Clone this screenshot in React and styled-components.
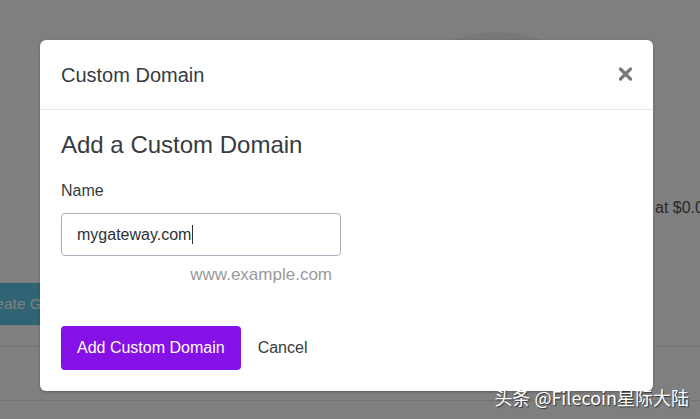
import React from "react";
import styled, { createGlobalStyle } from "styled-components";

const GlobalStyle = createGlobalStyle`
  html, body {
    margin: 0;
    padding: 0;
    width: 700px;
    height: 419px;
    overflow: hidden;
    font-family: "Liberation Sans", Arial, sans-serif;
  }
  * { box-sizing: border-box; }
`;

const App = () => {
  return (
    <>
      <GlobalStyle />
      <Screen>
        <Page>
          <Hero>
            <Visual>
              <Circle />
            </Visual>
            <Aside>
              <Price>at $0.05/GB</Price>
            </Aside>
          </Hero>
          <CtaRow>
            <TealButton>Create Gateway</TealButton>
          </CtaRow>
          <ListRow />
          <ListRow $tall />
        </Page>

        <Overlay>
          <Modal>
            <ModalHeader>
              <ModalTitle>Custom Domain</ModalTitle>
              <CloseButton aria-label="Close">
                <svg width="13" height="14" viewBox="0 0 13 14">
                  <path
                    d="M1.5 2 L11.5 12 M11.5 2 L1.5 12"
                    stroke="#7a7a7a"
                    strokeWidth="3.2"
                    strokeLinecap="round"
                  />
                </svg>
              </CloseButton>
            </ModalHeader>
            <ModalBody>
              <Heading>Add a Custom Domain</Heading>
              <Label>Name</Label>
              <FieldGroup>
                <Field>
                  <span>mygateway.com</span>
                  <Caret />
                </Field>
                <Hint>www.example.com</Hint>
              </FieldGroup>
              <Actions>
                <PrimaryButton>Add Custom Domain</PrimaryButton>
                <LinkButton>Cancel</LinkButton>
              </Actions>
            </ModalBody>
          </Modal>
        </Overlay>

        <Watermark>头条 @Filecoin星际大陆</Watermark>
      </Screen>
    </>
  );
};

const Screen = styled.div`
  position: relative;
  width: 700px;
  height: 419px;
  overflow: hidden;
  background: #ffffff;
`;

const Page = styled.main`
  display: flex;
  flex-direction: column;
  padding-top: 32px;
`;

const Hero = styled.section`
  display: flex;
  height: 251px;
`;

const Visual = styled.div`
  flex: 1;
  display: flex;
  justify-content: flex-end;
  padding-right: 27px;
  overflow: hidden;
`;

const Circle = styled.div`
  width: 260px;
  height: 260px;
  flex-shrink: 0;
  border-radius: 50%;
  background: #f0f0f0;
`;

const Aside = styled.div`
  width: 45px;
  padding-top: 167px;
  overflow: hidden;
`;

const Price = styled.p`
  margin: 0;
  white-space: nowrap;
  font-size: 16px;
  color: #555555;
`;

const CtaRow = styled.div`
  display: flex;
  height: 42px;
`;

const TealButton = styled.button`
  margin-left: -37px;
  padding: 0 16px;
  height: 42px;
  border: none;
  border-radius: 4px;
  background: #5ec8e8;
  color: #ffffff;
  font-family: inherit;
  font-size: 15.5px;
`;

const ListRow = styled.div`
  height: ${({ $tall }) => ($tall ? "54px" : "22px")};
  border-bottom: 1px solid #e4e4e4;
`;

const Overlay = styled.div`
  position: absolute;
  inset: 0;
  background: rgba(0, 0, 0, 0.5);
  display: flex;
  align-items: flex-start;
  padding: 40px 0 0 40px;
`;

const Modal = styled.div`
  width: 613px;
  background: #ffffff;
  border-radius: 6px;
  box-shadow: 0 1px 3px rgba(0, 0, 0, 0.25);
  overflow: hidden;
`;

const ModalHeader = styled.header`
  display: flex;
  align-items: center;
  justify-content: space-between;
  height: 70px;
  padding: 2px 21px 0 21px;
  border-bottom: 1px solid #e8e9ef;
`;

const ModalTitle = styled.h2`
  margin: 0;
  font-size: 20px;
  font-weight: 400;
  color: #363b41;
`;

const CloseButton = styled.button`
  display: flex;
  padding: 0 0 4px;
  border: none;
  background: none;
  cursor: pointer;
`;

const ModalBody = styled.div`
  display: flex;
  flex-direction: column;
  align-items: flex-start;
  padding: 20px 21px 21px;
`;

const Heading = styled.h3`
  margin: 0;
  font-size: 24px;
  line-height: 29px;
  font-weight: 400;
  color: #363b41;
`;

const Label = styled.label`
  margin-top: 22px;
  font-size: 16px;
  line-height: 19px;
  color: #363b41;
`;

const FieldGroup = styled.div`
  display: flex;
  flex-direction: column;
  width: 280px;
  margin-top: 13px;
`;

const Field = styled.div`
  display: flex;
  align-items: center;
  height: 43px;
  padding: 0 15px;
  border: 1px solid #a7afbb;
  border-radius: 4px;
  font-size: 16px;
  color: #2b3036;
`;

const Caret = styled.span`
  width: 1px;
  height: 19px;
  margin-left: 1px;
  background: #2b3036;
`;

const Hint = styled.span`
  margin-top: 9px;
  padding-right: 9px;
  text-align: right;
  font-size: 17px;
  line-height: 19px;
  color: #9a9a9a;
`;

const Actions = styled.div`
  display: flex;
  align-items: center;
  gap: 17px;
  margin-top: 42px;
`;

const PrimaryButton = styled.button`
  height: 44px;
  padding: 0 16px;
  border: none;
  border-radius: 4px;
  background: #8511e6;
  color: #ffffff;
  font-family: inherit;
  font-size: 16px;
  cursor: pointer;
`;

const LinkButton = styled.button`
  padding: 0;
  border: none;
  background: none;
  color: #363b41;
  font-family: inherit;
  font-size: 16px;
  cursor: pointer;
`;

const Watermark = styled.div`
  position: absolute;
  right: 11px;
  bottom: 12px;
  font-family: "Noto Sans CJK SC", "Liberation Sans", sans-serif;
  font-size: 18px;
  font-weight: 400;
  line-height: 20px;
  color: #ffffff;
  text-shadow: 1px 1px 1px rgba(0, 0, 0, 0.6);
  white-space: nowrap;
`;

export default App;
